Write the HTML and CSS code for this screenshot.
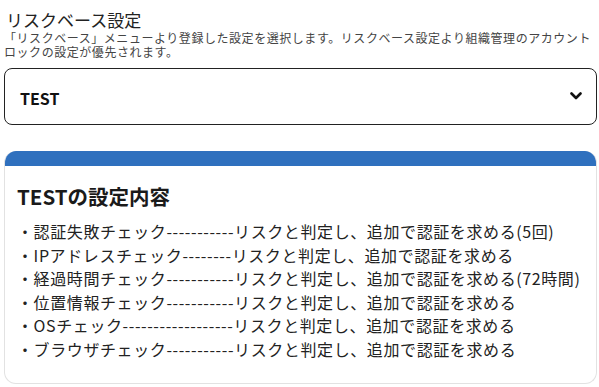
FILE: index.html
```html
<!DOCTYPE html>
<html lang="ja">
<head>
  <meta charset="UTF-8" />
  <meta name="viewport" content="width=device-width, initial-scale=1.0"/>
  <title>リスクベース設定</title>
  <link rel="stylesheet" href="styles.css">
</head>
<body>

  <!-- リスクベース選択 -->
  <div class="field">
    <h3 class="field-title">リスクベース設定</h3>
    <p class="field-note">「リスクベース」メニューより登録した設定を選択します。リスクベース設定より組織管理のアカウント<br>ロックの設定が優先されます。</p>
    <div class="select-box">
      <span class="select-value">TEST</span>
      <svg class="chevron" width="12" height="8" viewBox="0 0 12 8">
        <polyline points="1.5,1.5 6,6 10.5,1.5" fill="none" stroke="#111" stroke-width="2.6" stroke-linecap="round" stroke-linejoin="round"/>
      </svg>
    </div>
  </div>

  <!-- 設定内容 -->
  <div class="card">
    <div class="card-bar"></div>
    <div class="card-body">
      <h2>TESTの設定内容</h2>
      <ul class="rule-list">
        <li>・認証失敗チェック-----------リスクと判定し、追加で認証を求める(5回)</li>
        <li>・IPアドレスチェック--------リスクと判定し、追加で認証を求める</li>
        <li>・経過時間チェック-----------リスクと判定し、追加で認証を求める(72時間)</li>
        <li>・位置情報チェック-----------リスクと判定し、追加で認証を求める</li>
        <li>・OSチェック------------------リスクと判定し、追加で認証を求める</li>
        <li>・ブラウザチェック-----------リスクと判定し、追加で認証を求める</li>
      </ul>
    </div>
  </div>

</body>
</html>
```

FILE: styles.css
```css
* {
  box-sizing: border-box;
}
body {
  font-family: "Noto Sans CJK JP", "Noto Sans", sans-serif;
  margin: 0;
  padding: 8px 2px 0 4px;
  background: #fff;
  color: #222;
}
.field-title {
  margin: 0;
  font-size: 17px;
  font-weight: 400;
  line-height: 23px;
  padding-left: 2px;
}
.field-note {
  margin: 0;
  font-size: 12px;
  line-height: 14px;
  letter-spacing: 0.55px;
  color: #444;
}
.select-box {
  display: flex;
  align-items: center;
  justify-content: space-between;
  margin-top: 9px;
  height: 57px;
  padding: 2px 14px 0 15px;
  border: 1px solid #222;
  border-radius: 8px;
}
.select-value {
  font-size: 16px;
  font-weight: 700;
  color: #111;
}
.chevron {
  margin-top: -4px;
}
.card {
  margin-top: 26px;
  border: 1px solid #e2e2e2;
  border-top: none;
  border-radius: 12px;
  overflow: hidden;
}
.card-bar {
  height: 15px;
  background: #2f70be;
}
.card-body {
  padding: 16px 12px 22px 12px;
}
.card-body h2 {
  margin: 0;
  font-size: 20.5px;
  font-weight: 700;
  line-height: 28px;
  color: #1a1a1a;
}
.rule-list {
  list-style: none;
  margin: 10px 0 0 0;
  padding: 0;
}
.rule-list li {
  font-size: 16px;
  line-height: 23.5px;
  letter-spacing: 0.6px;
  color: #222;
  white-space: nowrap;
}
```
